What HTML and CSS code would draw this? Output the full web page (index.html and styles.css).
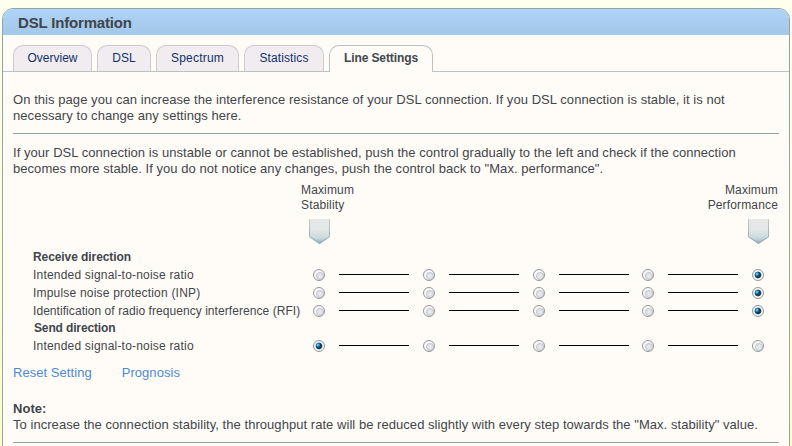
FILE: index.html
```html
<!DOCTYPE html>
<html lang="en">

<head>
  <meta charset="utf-8">
  <title>DSL Information</title>
  <link rel="stylesheet" href="styles.css">
</head>

<body>
  <div id="panel">
    <h1 id="title">DSL Information</h1>
    <ul id="tabs">
      <li class="overview">Overview</li>
      <li class="dsl">DSL</li>
      <li class="spectrum">Spectrum</li>
      <li class="statistics">Statistics</li>
      <li class="settings active">Line Settings</li>
    </ul>
    <div id="content">
      <p class="intro">On this page you can increase the interference resistance of your DSL connection. If you DSL connection is stable, it is not<br>necessary to change any settings here.</p>
      <hr>
      <p class="help">If your DSL connection is unstable or cannot be established, push the control gradually to the left and check if the connection<br>becomes more stable. If you do not notice any changes, push the control back to "Max. performance".</p>

      <div id="scale">
        <div class="end">
          Maximum<br>Stability
          <svg class="arrow" width="21" height="25" viewBox="0 0 21 25">
            <defs>
              <linearGradient id="fade" x1="0" y1="0" x2="0" y2="1">
                <stop offset="0" stop-color="#e9e9e9"/>
                <stop offset=".45" stop-color="#e2e6e6"/>
                <stop offset=".75" stop-color="#cbdadd"/>
                <stop offset="1" stop-color="#86a9b2"/>
              </linearGradient>
              <linearGradient id="edge" x1="0" y1="0" x2="0" y2="1">
                <stop offset="0" stop-color="#c3cccc"/>
                <stop offset="1" stop-color="#8ba8ae"/>
              </linearGradient>
            </defs>
            <path d="M0 0H21V18L10.500 25L0 18Z" fill="url(#fade)"/>
            <path d="M.5 0V17.700L10.500 24.300L20.500 17.700V0" fill="none" stroke="url(#edge)"/>
          </svg>
        </div>
        <div class="end right">
          Maximum<br>Performance
          <svg class="arrow" width="21" height="25" viewBox="0 0 21 25">
            <path d="M0 0H21V18L10.500 25L0 18Z" fill="url(#fade)"/>
            <path d="M.5 0V17.700L10.500 24.300L20.500 17.700V0" fill="none" stroke="url(#edge)"/>
          </svg>
        </div>
      </div>

      <div id="sliders">
        <h2>Receive direction</h2>
        <div class="row">
          <label>Intended signal-to-noise ratio</label>
          <i class="radio"></i><i class="line"></i><i class="radio"></i><i class="line"></i><i class="radio"></i><i class="line"></i><i class="radio"></i><i class="line"></i><i class="radio on"></i>
        </div>
        <div class="row">
          <label>Impulse noise protection (INP)</label>
          <i class="radio"></i><i class="line"></i><i class="radio"></i><i class="line"></i><i class="radio"></i><i class="line"></i><i class="radio"></i><i class="line"></i><i class="radio on"></i>
        </div>
        <div class="row">
          <label class="rfi">Identification of radio frequency interference (RFI)</label>
          <i class="radio"></i><i class="line"></i><i class="radio"></i><i class="line"></i><i class="radio"></i><i class="line"></i><i class="radio"></i><i class="line"></i><i class="radio on"></i>
        </div>
        <h2 class="send">Send direction</h2>
        <div class="row">
          <label>Intended signal-to-noise ratio</label>
          <i class="radio on"></i><i class="line"></i><i class="radio"></i><i class="line"></i><i class="radio"></i><i class="line"></i><i class="radio"></i><i class="line"></i><i class="radio"></i>
        </div>
      </div>

      <div id="links">
        <a>Reset Setting</a>
        <a>Prognosis</a>
      </div>

      <p class="note"><b>Note:</b><br>To increase the connection stability, the throughput rate will be reduced slightly with every step towards the "Max. stability" value.</p>
      <hr>
    </div>
  </div>
</body>

</html>
```
FILE: styles.css
```css
* {
  box-sizing: border-box;
}

body {
  margin: 0;
  padding: 8px 2px 0;
  height: 446px;
  overflow: hidden;
  background: linear-gradient(#ffffee, #ffffc4);
  color: #3f464c;
  font: 13px/16px "Liberation Sans", Arial, sans-serif;
}

#panel {
  width: 788px;
  height: 460px;
  border: 1px solid #91a5a5;
  border-radius: 11px 11px 0 0;
  background-color: #fffcf7;
  overflow: hidden;
}

#title {
  margin: 0;
  height: 26px;
  padding-left: 15px;
  background: linear-gradient(#afd4f7, #a9cdef 50%, #a3c8e8);
  font-size: 15px;
  line-height: 28px;
  letter-spacing: -.17px;
}

#tabs {
  display: flex;
  gap: 5px;
  margin: 10px 0 0;
  padding: 0 0 0 10px;
  list-style: none;
  height: 27px;
  border-bottom: 1px solid #b9c3c4;
  font-size: 12px;
}

#tabs li {
  height: 26px;
  border: 1px solid #c9cccb;
  border-bottom: 0;
  border-radius: 10px 10px 0 0;
  background-color: #f0ecf0;
  color: #12306a;
  line-height: 25px;
  text-align: center;
}

#tabs .overview {
  width: 79px;
}

#tabs .dsl {
  width: 54px;
}

#tabs .spectrum {
  width: 83px;
  letter-spacing: .2px;
}

#tabs .statistics {
  width: 80px;
  letter-spacing: .1px;
}

#tabs .settings {
  width: 104px;
  letter-spacing: -.1px;
}

#tabs .active {
  height: 27px;
  border-color: #b9c3c4;
  background-color: #fffcf7;
  color: #3f464c;
  font-weight: bold;
}

#content {
  padding: 0 10px;
}

#content p {
  margin: 0;
  white-space: nowrap;
  letter-spacing: .05px;
}

#content hr {
  width: 766px;
  height: 1px;
  margin: 0;
  border: 0;
  background-color: #91a5a5;
}

#content .intro {
  padding: 20px 0 9px;
  letter-spacing: .06px;
}

#content .help {
  padding-top: 11px;
}

#scale {
  display: flex;
  justify-content: space-between;
  padding: 6px 1px 0 288px;
  height: 71px;
  font-size: 12px;
  line-height: 15px;
  letter-spacing: .15px;
}

.end.right {
  text-align: right;
}

.arrow {
  display: block;
  margin: 6px 0 0 8px;
}

.right .arrow {
  margin: 6px 9px 0 auto;
}

#sliders {
  padding-left: 20px;
  font-size: 12px;
  line-height: 18px;
}

#sliders h2 {
  margin: 0;
  height: 18px;
  font-size: 12px;
  letter-spacing: -.08px;
}

#sliders .send {
  height: 17px;
  padding-left: 1px;
  line-height: 17px;
  letter-spacing: -.14px;
}

.row {
  display: flex;
  height: 18px;
}

.row label {
  width: 280px;
  white-space: nowrap;
  letter-spacing: .2px;
}

.row .rfi {
  letter-spacing: .06px;
}

.radio {
  width: 12px;
  height: 12px;
  margin-top: 3px;
  border: 1px solid #94979a;
  border-radius: 50%;
  background: radial-gradient(circle at 6px 6px, #eceef0 0, #dcdfe4 2.500px, #c6cad1 3.500px, #f8f8f8 4.500px);
}

.radio.on {
  background: radial-gradient(circle at 4px 4px, #8fdcf5 0, #2289c0 1.500px, transparent 2.500px), radial-gradient(circle at center, #123e5e 2.800px, #f4f4f4 3.800px);
}

.line {
  width: 70px;
  height: 1px;
  margin: 8px 14px 0;
  background-color: #000;
}

.row .line:nth-of-type(6) {
  margin-right: 13px;
}

#links {
  display: flex;
  gap: 30px;
  padding-top: 10px;
  color: #4c8bd0;
  letter-spacing: .05px;
}

#content .note {
  padding: 20px 0 9px;
  letter-spacing: .046px;
}
```
